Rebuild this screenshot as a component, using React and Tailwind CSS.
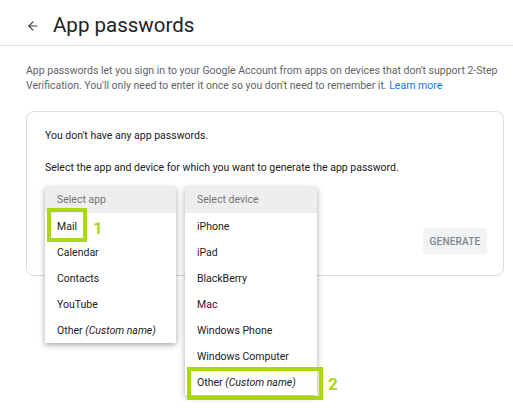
import React from "react";
import { ArrowLeft } from "lucide-react";

const APPS = ["Mail", "Calendar", "Contacts", "YouTube", "Other"];
const DEVICES = [
  "iPhone",
  "iPad",
  "BlackBerry",
  "Mac",
  "Windows Phone",
  "Windows Computer",
  "Other",
];

// green callout drawn on top of a menu item
const Callout = ({ number, boxClass, numClass }) => (
  <>
    <div className={`absolute border-4 border-[#a9d813] ${boxClass}`} />
    <span
      className={`absolute text-[17px] font-bold leading-none text-[#a9d813] ${numClass}`}
    >
      {number}
    </span>
  </>
);

const MenuItem = ({ label, children }) => (
  <div className="relative h-[26px] flex items-center pl-[12px] pt-[2px] text-[10.5px] text-[#202124]">
    {label === "Other" ? (
      <span>
        Other <i>(Custom name)</i>
      </span>
    ) : (
      <span>{label}</span>
    )}
    {children}
  </div>
);

const Dropdown = ({ placeholder, items, widthClass, renderExtra }) => (
  <div className={`relative h-[26px] ${widthClass}`}>
    <div className="absolute top-0 left-0 w-full bg-white shadow-[0_2px_6px_rgba(0,0,0,0.35)] z-10">
      <div className="h-[26px] flex items-center pl-[12px] bg-[#eeeeee] text-[10.5px] text-[#757575]">
        {placeholder}
      </div>
      {items.map((item, i) => (
        <MenuItem key={item + i} label={item}>
          {renderExtra && renderExtra(item)}
        </MenuItem>
      ))}
    </div>
  </div>
);

const App = () => {
  return (
    <div className="w-[513px] h-[418px] bg-white overflow-hidden font-['Roboto','Liberation_Sans',sans-serif]">
      {/* Header */}
      <div className="h-[46px] pt-[6px] pl-[26px] flex items-center border-b border-[#e3e4e8]">
        <ArrowLeft className="w-[14px] h-[14px] text-[#3c4043]" strokeWidth={2} />
        <h1 className="ml-[13px] text-[20.5px] leading-none text-[#202124]">
          App passwords
        </h1>
      </div>

      {/* Intro */}
      <p className="mt-[17px] pl-[26px] pr-[8px] text-[10.5px] leading-[15px] text-[#5f6368]">
        App passwords let you sign in to your Google Account from apps on
        devices that don't support 2-Step
        <br />
        Verification. You'll only need to enter it once so you don't need to
        remember it. <span className="text-[#1a73e8]">Learn more</span>
      </p>

      {/* Card */}
      <div className="mt-[18px] ml-[26px] w-[478px] h-[165px] border border-[#dadce0] rounded-lg flex flex-col pl-[18px] pr-[16px] pt-[16px]">
        <p className="text-[10.5px] leading-[15px] text-[#202124]">
          You don't have any app passwords.
        </p>
        <p className="mt-[17px] text-[10.5px] leading-[15px] text-[#202124]">
          Select the app and device for which you want to generate the app
          password.
        </p>

        <div className="mt-[12px] flex gap-[9px]">
          <Dropdown
            placeholder="Select app"
            items={APPS}
            widthClass="w-[131px]"
            renderExtra={(item) =>
              item === "Mail" ? (
                <Callout
                  number="1"
                  boxClass="left-[2px] top-[-5px] w-[40px] h-[34px]"
                  numClass="left-[48px] top-[7px]"
                />
              ) : null
            }
          />
          <Dropdown
            placeholder="Select device"
            items={DEVICES}
            widthClass="w-[132px]"
            renderExtra={(item) =>
              item === "Other" ? (
                <Callout
                  number="2"
                  boxClass="left-[2px] top-[-2px] w-[136px] h-[33px]"
                  numClass="left-[143px] top-[7px]"
                />
              ) : null
            }
          />
        </div>

        <div className="mt-[15px] flex justify-end">
          <button className="w-[64px] h-[26px] rounded bg-[#f1f3f4] text-[10px] font-medium tracking-[0.2px] text-[#80868b]">
            GENERATE
          </button>
        </div>
      </div>
    </div>
  );
};

export default App;
